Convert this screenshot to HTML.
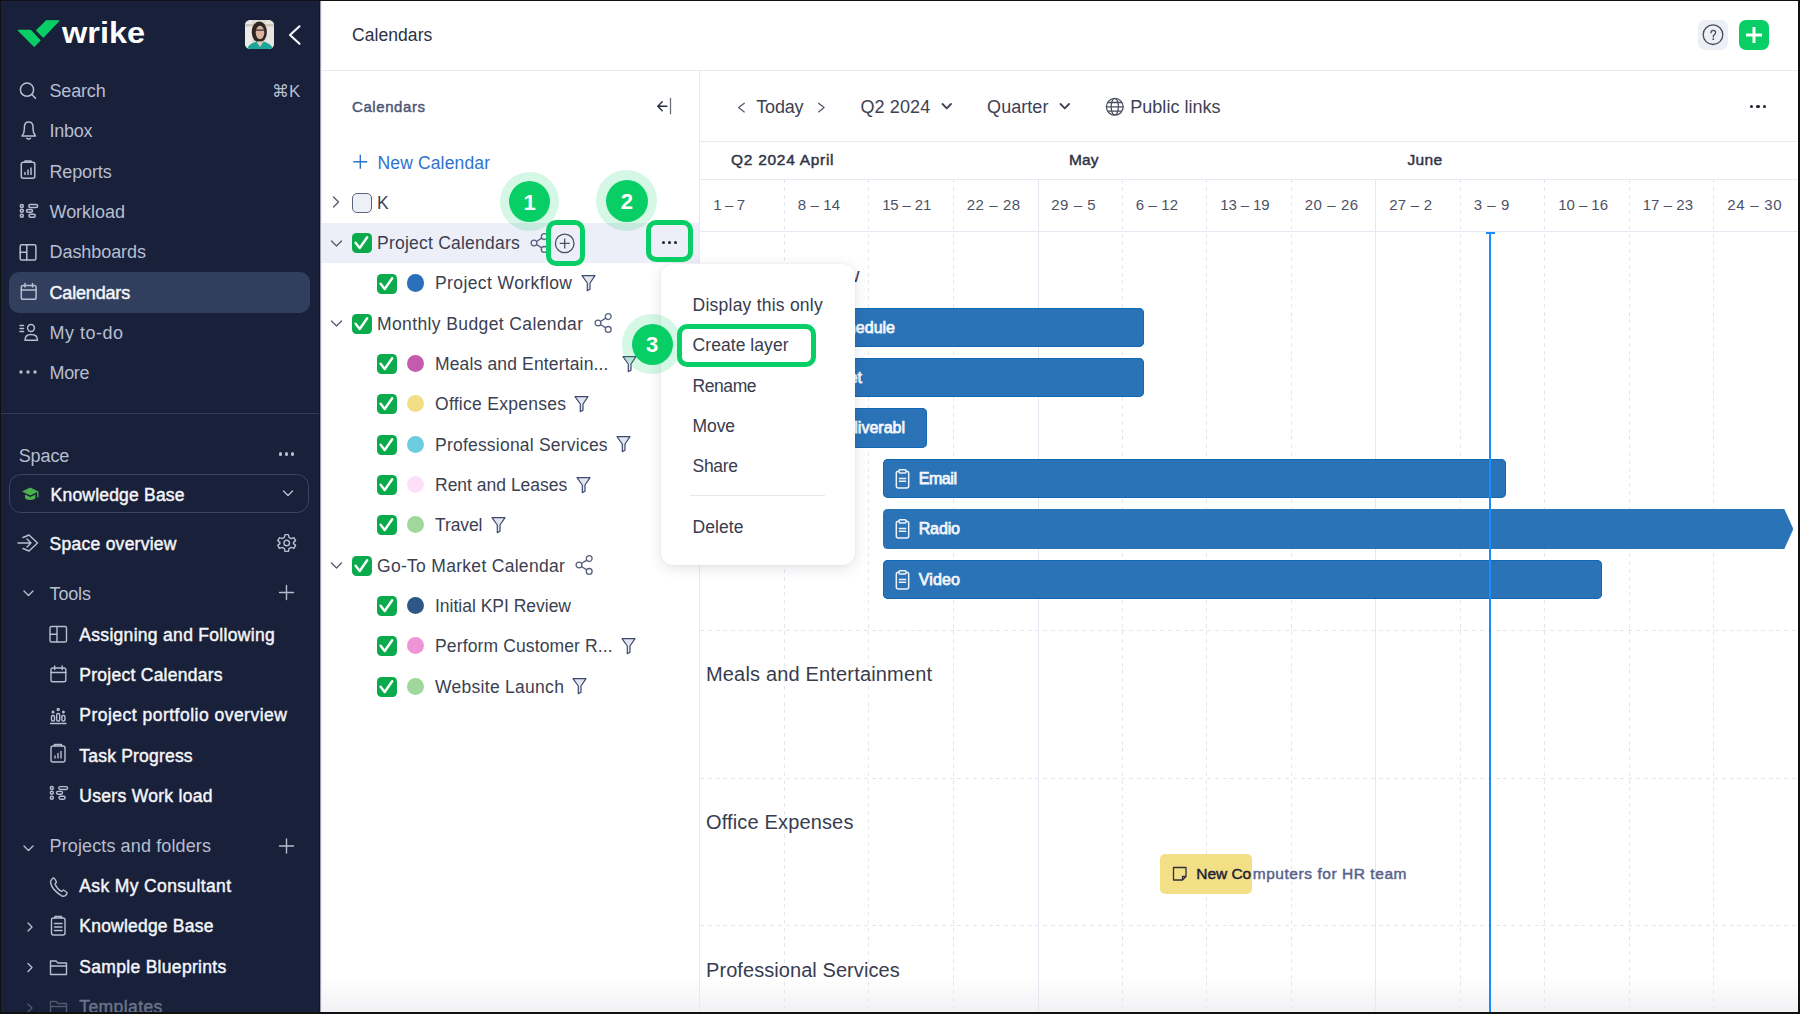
<!DOCTYPE html><html><head><meta charset="utf-8"><style>
html,body{margin:0;padding:0;width:1800px;height:1014px;overflow:hidden;background:#fff;font-family:"Liberation Sans",sans-serif;}
.t{position:absolute;white-space:nowrap;}
.b{position:absolute;}
</style></head><body>
<div class="b" style="left:0px;top:0px;width:320px;height:1014px;background:#19203a;"></div>
<svg class="b" style="left:10px;top:10px;" width="150" height="50" viewBox="0 0 150 50" fill="none"><path d="M8.3 20.4 L19.6 20.4 Q20.6 20.4 21.3 21.1 L30 30.4 L24.2 36.3 Z" fill="#08cf65" stroke="#08cf65" stroke-width="1.2" stroke-linejoin="round"/>
<path d="M26.7 20.4 L36.25 10.8 L48.75 10.8 L33.3 27.1 Z" fill="#08cf65" stroke="#08cf65" stroke-width="1.2" stroke-linejoin="round"/>
<text x="52" y="33.3" font-family="Liberation Sans" font-weight="700" font-size="30" fill="#ffffff" textLength="83" lengthAdjust="spacingAndGlyphs">wrike</text></svg>
<svg class="b" style="left:245px;top:20px;" width="29" height="29" viewBox="0 0 29 29" fill="none"><defs><clipPath id="av"><rect x="0" y="0" width="29" height="29" rx="5.5"/></clipPath></defs>
<g clip-path="url(#av)"><rect width="29" height="29" fill="#dedbd4"/><rect x="0" y="0" width="7" height="29" fill="#ebeae6"/><rect x="21" y="0" width="8" height="29" fill="#e6e5e1"/><rect x="0" y="4" width="29" height="2.5" fill="#cfc7b8"/>
<ellipse cx="14.3" cy="12" rx="7.6" ry="10.5" fill="#2f2522"/>
<ellipse cx="15" cy="12.5" rx="4.3" ry="6.8" fill="#d9b4a0"/>
<path d="M10.8 10.2 L19.2 10.2" stroke="#3a3030" stroke-width="1.2"/>
<ellipse cx="15" cy="30" rx="13" ry="8.5" fill="#1aa797"/>
<path d="M11.5 21.5 L15 27 L18.5 21.5 Z" fill="#e8c8b8"/></g></svg>
<svg class="b" style="left:285px;top:22px;" width="20" height="26" viewBox="0 0 20 26" fill="none"><path d="M14.5 4.3 L5 13 L14.5 21.8" stroke="#f3f5f9" stroke-width="2.2" stroke-linecap="round" stroke-linejoin="round"/></svg>
<div class="b" style="left:9px;top:272px;width:301px;height:41px;background:#323e5e;border-radius:10px;"></div>
<div class="t" style="left:49.50px;top:82.00px;font-size:18px;line-height:18px;color:#b7bed0;font-weight:400;letter-spacing:-0.167px;">Search</div>
<div class="t" style="left:49.50px;top:122.00px;font-size:18px;line-height:18px;color:#b7bed0;font-weight:400;letter-spacing:-0.258px;">Inbox</div>
<div class="t" style="left:49.50px;top:163.00px;font-size:18px;line-height:18px;color:#b7bed0;font-weight:400;letter-spacing:-0.138px;">Reports</div>
<div class="t" style="left:49.50px;top:203.00px;font-size:18px;line-height:18px;color:#b7bed0;font-weight:400;letter-spacing:-0.029px;">Workload</div>
<div class="t" style="left:49.50px;top:243.00px;font-size:18px;line-height:18px;color:#b7bed0;font-weight:400;letter-spacing:-0.062px;">Dashboards</div>
<div class="t" style="left:49.50px;top:284.00px;font-size:18px;line-height:18px;color:#f3f5f9;font-weight:400;letter-spacing:-0.169px;-webkit-text-stroke:0.45px #f3f5f9;">Calendars</div>
<div class="t" style="left:49.50px;top:324.00px;font-size:18px;line-height:18px;color:#b7bed0;font-weight:400;letter-spacing:0.497px;">My to-do</div>
<div class="t" style="left:49.50px;top:364.00px;font-size:18px;line-height:18px;color:#b7bed0;font-weight:400;letter-spacing:-0.337px;">More</div>
<div class="t" style="left:272.00px;top:83.00px;font-size:17px;line-height:17px;color:#b7bed0;font-weight:400;letter-spacing:0.000px;">&#8984;K</div>
<div class="b" style="left:0px;top:413px;width:320px;height:1px;background:#323c59;"></div>
<div class="t" style="left:18.70px;top:447.00px;font-size:18px;line-height:18px;color:#b7bed0;font-weight:400;letter-spacing:-0.110px;">Space</div>
<div class="b" style="left:278.8px;top:452.3px;width:3.4px;height:3.4px;background:#b7bed0;border-radius:50%;"></div>
<div class="b" style="left:284.8px;top:452.3px;width:3.4px;height:3.4px;background:#b7bed0;border-radius:50%;"></div>
<div class="b" style="left:290.8px;top:452.3px;width:3.4px;height:3.4px;background:#b7bed0;border-radius:50%;"></div>
<div class="b" style="left:9px;top:474px;width:300px;height:39px;background:transparent;border:1px solid #39445f;border-radius:12px;box-sizing:border-box;"></div>
<div class="t" style="left:50.60px;top:487.00px;font-size:17.5px;line-height:17.5px;color:#f3f5f9;font-weight:400;letter-spacing:0.196px;-webkit-text-stroke:0.45px #f3f5f9;">Knowledge Base</div>
<div class="t" style="left:49.60px;top:536.00px;font-size:17.5px;line-height:17.5px;color:#f3f5f9;font-weight:400;letter-spacing:0.259px;-webkit-text-stroke:0.45px #f3f5f9;">Space overview</div>
<div class="t" style="left:49.60px;top:585.00px;font-size:18px;line-height:18px;color:#b7bed0;font-weight:400;letter-spacing:-0.180px;">Tools</div>
<div class="t" style="left:79.30px;top:627.00px;font-size:17.5px;line-height:17.5px;color:#f3f5f9;font-weight:400;letter-spacing:0.303px;-webkit-text-stroke:0.45px #f3f5f9;">Assigning and Following</div>
<div class="t" style="left:79.30px;top:667.00px;font-size:17.5px;line-height:17.5px;color:#f3f5f9;font-weight:400;letter-spacing:0.263px;-webkit-text-stroke:0.45px #f3f5f9;">Project Calendars</div>
<div class="t" style="left:79.30px;top:707.00px;font-size:17.5px;line-height:17.5px;color:#f3f5f9;font-weight:400;letter-spacing:0.484px;-webkit-text-stroke:0.45px #f3f5f9;">Project portfolio overview</div>
<div class="t" style="left:79.30px;top:748.00px;font-size:17.5px;line-height:17.5px;color:#f3f5f9;font-weight:400;letter-spacing:0.202px;-webkit-text-stroke:0.45px #f3f5f9;">Task Progress</div>
<div class="t" style="left:79.30px;top:788.00px;font-size:17.5px;line-height:17.5px;color:#f3f5f9;font-weight:400;letter-spacing:0.298px;-webkit-text-stroke:0.45px #f3f5f9;">Users Work load</div>
<div class="t" style="left:49.50px;top:837.00px;font-size:18px;line-height:18px;color:#b7bed0;font-weight:400;letter-spacing:0.122px;">Projects and folders</div>
<div class="t" style="left:79.30px;top:878.00px;font-size:17.5px;line-height:17.5px;color:#f3f5f9;font-weight:400;letter-spacing:0.363px;-webkit-text-stroke:0.45px #f3f5f9;">Ask My Consultant</div>
<div class="t" style="left:79.30px;top:918.00px;font-size:17.5px;line-height:17.5px;color:#f3f5f9;font-weight:400;letter-spacing:0.212px;-webkit-text-stroke:0.45px #f3f5f9;">Knowledge Base</div>
<div class="t" style="left:79.30px;top:959.00px;font-size:17.5px;line-height:17.5px;color:#f3f5f9;font-weight:400;letter-spacing:0.305px;-webkit-text-stroke:0.45px #f3f5f9;">Sample Blueprints</div>
<div class="t" style="left:79.30px;top:999.00px;font-size:17.5px;line-height:17.5px;color:#6a7288;font-weight:400;letter-spacing:0.405px;-webkit-text-stroke:0.45px #6a7288;">Templates</div>
<div class="b" style="left:320px;top:0px;width:1480px;height:71px;background:#ffffff;"></div>
<div class="t" style="left:352.00px;top:27.00px;font-size:17.5px;line-height:17.5px;color:#2c3042;font-weight:400;letter-spacing:0.066px;">Calendars</div>
<div class="b" style="left:320px;top:70px;width:1480px;height:1px;background:#e6e9f1;"></div>
<div class="b" style="left:1698px;top:20px;width:30px;height:30px;background:#eceff6;border-radius:7px;"></div>
<div class="b" style="left:1739px;top:20px;width:30px;height:30px;background:#08cf65;border-radius:7px;"></div>
<div class="b" style="left:699px;top:71px;width:1px;height:943px;background:#e6e9f1;"></div>
<div class="t" style="left:352.00px;top:99.00px;font-size:15px;line-height:15px;color:#4b5577;font-weight:400;letter-spacing:0.578px;-webkit-text-stroke:0.45px #4b5577;">Calendars</div>
<div class="t" style="left:377.50px;top:155.00px;font-size:17.5px;line-height:17.5px;color:#2f72d0;font-weight:400;letter-spacing:0.146px;">New Calendar</div>
<div class="b" style="left:320px;top:223px;width:379px;height:40px;background:#eceff7;"></div>
<div class="b" style="left:700px;top:141px;width:1100px;height:1px;background:#e6e9f1;"></div>
<div class="b" style="left:700px;top:179px;width:1100px;height:1px;background:#e6e9f1;"></div>
<div class="b" style="left:700px;top:231px;width:1100px;height:1px;background:#e6e9f1;"></div>
<svg class="b" style="left:0px;top:60px;" width="60" height="340" viewBox="0 0 60 340" fill="none">
<g stroke="#b7bed0" stroke-width="1.5" fill="none" stroke-linecap="round" stroke-linejoin="round">
 <circle cx="27" cy="29.7" r="6.6"/><path d="M31.8 34.5 L35.5 38.3"/>
 <path d="M22 76 L35.5 76 Q33 73 33 69 L33 67 Q33 62 28.6 62 Q24.4 62 24.4 67 L24.4 69 Q24.4 73 22 76 Z"/><path d="M26.7 78.3 Q28.6 80 30.5 78.3"/>
 <rect x="21.3" y="102.3" width="13.5" height="16" rx="2"/><path d="M25 102.3 L25 101 L31 101 L31 102.3"/><path d="M25 114.5 L25 112.5 M28 114.5 L28 110 M31 114.5 L31 108"/>
 <circle cx="21.8" cy="146" r="1.5"/><circle cx="21.8" cy="150.8" r="1.5"/><circle cx="21.8" cy="155.7" r="1.5"/>
 <rect x="28.8" y="144.6" width="8.8" height="2.9" rx="1.45"/><rect x="26.5" y="149.4" width="6" height="2.9" rx="1.45"/><rect x="29" y="154.3" width="6.2" height="2.9" rx="1.45"/>
 <rect x="20.2" y="184.7" width="15.7" height="15.4" rx="1.5"/><path d="M26.8 184.7 L26.8 200.1 M20.2 192.3 L26.8 192.3"/>
 <rect x="21.3" y="225.5" width="14.8" height="13.8" rx="1.8"/><path d="M21.3 230 L36.1 230 M25 223.5 L25 227 M32.5 223.5 L32.5 227"/>
 <path d="M20 265.5 L23.5 265.5 M20 268.5 L23.5 268.5 M20 271.5 L23.5 271.5"/><circle cx="31" cy="268" r="3.4"/><path d="M25 280.2 Q25 274.5 31 274.5 Q37.5 274.5 37.5 280.2 Z"/>
</g>
<circle cx="21" cy="312" r="1.7" fill="#b7bed0"/><circle cx="28" cy="312" r="1.7" fill="#b7bed0"/><circle cx="35" cy="312" r="1.7" fill="#b7bed0"/>
</svg>
<svg class="b" style="left:0px;top:480px;" width="320" height="130" viewBox="0 0 320 130" fill="none">
<g fill="#4bae4f"><path d="M30.2 7.5 L38.5 11.5 L30.2 15.5 L21.9 11.5 Z"/><path d="M25 14.5 L25 18.5 Q30.2 21.5 35.4 18.5 L35.4 14.5 L30.2 17 Z"/><rect x="37.2" y="11.5" width="1.3" height="6"/></g>
<path d="M283.5 11 L288 15.5 L292.5 11" stroke="#b7bed0" stroke-width="1.4" fill="none" stroke-linecap="round" stroke-linejoin="round"/>
<g stroke="#b7bed0" stroke-width="1.4" fill="none" stroke-linecap="round" stroke-linejoin="round">
 <path d="M18 63 L31 63 M27 59 L31 63 L27 67"/><path d="M23 57.5 L29 55 L37.5 63 L29 71 L23 68.5"/>
 <path d="M24 111 L28.5 115.5 L33 111"/>
 <path d="M286.5 105.5 L286.5 119.5 M279.5 112.5 L293.5 112.5"/>
</g>
<g stroke="#b7bed0" stroke-width="1.4" fill="none">
 <circle cx="286.7" cy="63" r="2.8"/>
 <path d="M285 54.6 L288.4 54.6 L289 57.3 L291.3 58.6 L293.9 57.7 L295.6 60.6 L293.5 62.4 L293.5 63.6 L295.6 65.4 L293.9 68.3 L291.3 67.4 L289 68.7 L288.4 71.4 L285 71.4 L284.4 68.7 L282.1 67.4 L279.5 68.3 L277.8 65.4 L279.9 63.6 L279.9 62.4 L277.8 60.6 L279.5 57.7 L282.1 58.6 L284.4 57.3 Z" stroke-linejoin="round"/>
</g>
</svg>
<svg class="b" style="left:0px;top:620px;" width="320" height="394" viewBox="0 0 320 394" fill="none">
<g stroke="#b7bed0" stroke-width="1.4" fill="none" stroke-linecap="round" stroke-linejoin="round">
 <rect x="50" y="6.5" width="16.5" height="15.5" rx="1.5"/><path d="M57 6.5 L57 22 M50 14.3 L57 14.3"/>
 <rect x="51" y="48" width="14.8" height="13.8" rx="1.8"/><path d="M51 52.5 L65.8 52.5 M54.7 46 L54.7 49.5 M62.2 46 L62.2 49.5"/>
 <path d="M50.5 103.5 L66 103.5"/><rect x="51.5" y="95.5" width="3" height="5.5" rx="1.2"/><rect x="56.7" y="93.5" width="3" height="7.5" rx="1.2"/><rect x="61.9" y="95.5" width="3" height="5.5" rx="1.2"/><circle cx="58.2" cy="89.5" r="1"/><circle cx="53" cy="92" r="0.8"/><circle cx="63.4" cy="92" r="0.8"/>
 <rect x="51" y="126" width="14" height="16" rx="2"/><path d="M54.5 126 L54.5 124.5 L61.5 124.5 L61.5 126"/><path d="M55 138 L55 136 M58 138 L58 133.5 M61 138 L61 131.5"/>
 <circle cx="51.8" cy="168" r="1.5"/><circle cx="51.8" cy="172.8" r="1.5"/><circle cx="51.8" cy="177.7" r="1.5"/>
 <rect x="58.8" y="166.6" width="8.8" height="2.9" rx="1.45"/><rect x="56.5" y="171.4" width="6" height="2.9" rx="1.45"/><rect x="59" y="176.3" width="6.2" height="2.9" rx="1.45"/>
 <path d="M24 226 L28.5 230.5 L33 226"/>
 <path d="M286.5 219 L286.5 233 M279.5 226 L293.5 226"/>
 <path d="M53 258 Q50.5 260 50.5 262.5 Q52 270 62 276 Q64.5 277 66.5 274.5 L67 272.5 L63.5 270 L61.5 271.5 Q57 269 55 264 L56.5 262 L54.5 258.5 Z"/>
 <path d="M28 303 L32 307 L28 311"/><rect x="51.5" y="298" width="13.5" height="17" rx="2"/><path d="M55 298 L55 296.5 L61.5 296.5 L61.5 298 M54.5 303.5 L62 303.5 M54.5 307 L62 307 M54.5 310.5 L62 310.5"/>
 <path d="M28 343.5 L32 347.5 L28 351.5"/><path d="M50.5 354.5 L50.5 341 L56 341 L58 343 L66.5 343 L66.5 354.5 Z M50.5 346 L66.5 346"/>
 <g opacity="0.35"><path d="M28 384 L32 388 L28 392"/><path d="M50.5 395 L50.5 381.5 L56 381.5 L58 383.5 L66.5 383.5 L66.5 395 Z M50.5 386.5 L66.5 386.5"/></g>
</g>
</svg>
<svg class="b" style="left:1698px;top:20px;" width="30" height="30" viewBox="0 0 30 30" fill="none"><circle cx="15" cy="14.7" r="9.8" stroke="#4a4b55" stroke-width="1.3"/><path d="M13 12.8 Q13 10.4 15.3 10.4 Q17.6 10.4 17.6 12.6 Q17.6 13.9 16.2 14.8 Q15.3 15.5 15.3 16.9" stroke="#4a4b55" stroke-width="1.3" fill="none" stroke-linecap="round"/><circle cx="15.3" cy="19.2" r="0.9" fill="#4a4b55"/></svg>
<svg class="b" style="left:1739px;top:20px;" width="30" height="30" viewBox="0 0 30 30" fill="none"><path d="M15 7 L15 23 M7 15 L23 15" stroke="#ffffff" stroke-width="3"/></svg>
<svg class="b" style="left:640px;top:90px;" width="40" height="30" viewBox="0 0 40 30" fill="none"><path d="M17.8 16.3 L26.9 16.3 M22.2 11.8 L17.8 16.3 L22.2 20.7" stroke="#2a2e3e" stroke-width="1.4" fill="none" stroke-linecap="round" stroke-linejoin="round"/><path d="M30.5 8.5 L30.5 23.8" stroke="#6b6e78" stroke-width="1.3" stroke-linecap="round"/></svg>
<svg class="b" style="left:340px;top:145px;" width="40" height="30" viewBox="0 0 40 30" fill="none"><path d="M20.3 9.8 L20.3 23.8 M13.3 16.8 L27.3 16.8" stroke="#2f72d0" stroke-width="1.4" fill="none"/></svg>
<svg class="b" style="left:326px;top:192.3px;" width="20" height="20" viewBox="0 0 20 20" fill="none"><path d="M7.5 5 L12.5 10 L7.5 15" stroke="#55596b" stroke-width="1.3" fill="none" stroke-linecap="round" stroke-linejoin="round"/></svg>
<div class="b" style="left:352px;top:192.8px;width:20px;height:20px;background:#eef0f7;border:1.3px solid #5b647f;border-radius:5px;box-sizing:border-box;"></div>
<div class="t" style="left:377.00px;top:195.00px;font-size:17.5px;line-height:17.5px;color:#3b3f52;font-weight:400;letter-spacing:0.000px;">K</div>
<svg class="b" style="left:326px;top:232.63px;" width="20" height="20" viewBox="0 0 20 20" fill="none"><path d="M5.5 8 L10.5 13 L15.5 8" stroke="#55596b" stroke-width="1.3" fill="none" stroke-linecap="round" stroke-linejoin="round"/></svg>
<svg class="b" style="left:352px;top:233.1px;" width="20" height="20" viewBox="0 0 20 20" fill="none"><rect x="0" y="0" width="20" height="20" rx="4.5" fill="#0bab4d"/><path d="M3.6 9.8 L7.7 15 L15.2 4.2" stroke="#fff" stroke-width="2.4" fill="none" stroke-linecap="round" stroke-linejoin="round"/></svg>
<div class="t" style="left:377.00px;top:235.00px;font-size:17.5px;line-height:17.5px;color:#3b3f52;font-weight:400;letter-spacing:0.225px;">Project Calendars</div>
<svg class="b" style="left:530.2px;top:232.63px;" width="22" height="20" viewBox="0 0 22 20" fill="none"><g stroke="#56607e" stroke-width="1.3" fill="none"><circle cx="4" cy="10" r="2.9"/><circle cx="14.2" cy="3.6" r="2.9"/><circle cx="14.2" cy="16.4" r="2.9"/><path d="M6.5 8.5 L11.7 5.1 M6.5 11.5 L11.7 14.9"/></g></svg>
<svg class="b" style="left:376.5px;top:273.5px;" width="20" height="20" viewBox="0 0 20 20" fill="none"><rect x="0" y="0" width="20" height="20" rx="4.5" fill="#0bab4d"/><path d="M3.6 9.8 L7.7 15 L15.2 4.2" stroke="#fff" stroke-width="2.4" fill="none" stroke-linecap="round" stroke-linejoin="round"/></svg>
<div class="b" style="left:407px;top:274.4px;width:17.2px;height:17.2px;border-radius:50%;background:#2a6fba;"></div>
<div class="t" style="left:435.00px;top:275.00px;font-size:17.5px;line-height:17.5px;color:#3b3f52;font-weight:400;letter-spacing:0.402px;">Project Workflow</div>
<svg class="b" style="left:580.5px;top:274.96000000000004px;" width="16" height="18" viewBox="0 0 16 18" fill="none"><path d="M1 0.7 L14 0.7 L9 8 L9 14.2 L6.3 15.6 L6.3 8 Z" stroke="#3d4a6e" stroke-width="1.2" fill="#e3e6ef" stroke-linejoin="round"/></svg>
<svg class="b" style="left:326px;top:313.29px;" width="20" height="20" viewBox="0 0 20 20" fill="none"><path d="M5.5 8 L10.5 13 L15.5 8" stroke="#55596b" stroke-width="1.3" fill="none" stroke-linecap="round" stroke-linejoin="round"/></svg>
<svg class="b" style="left:352px;top:313.8px;" width="20" height="20" viewBox="0 0 20 20" fill="none"><rect x="0" y="0" width="20" height="20" rx="4.5" fill="#0bab4d"/><path d="M3.6 9.8 L7.7 15 L15.2 4.2" stroke="#fff" stroke-width="2.4" fill="none" stroke-linecap="round" stroke-linejoin="round"/></svg>
<div class="t" style="left:377.00px;top:316.00px;font-size:17.5px;line-height:17.5px;color:#3b3f52;font-weight:400;letter-spacing:0.387px;">Monthly Budget Calendar</div>
<svg class="b" style="left:593.5px;top:313.29px;" width="22" height="20" viewBox="0 0 22 20" fill="none"><g stroke="#56607e" stroke-width="1.3" fill="none"><circle cx="4" cy="10" r="2.9"/><circle cx="14.2" cy="3.6" r="2.9"/><circle cx="14.2" cy="16.4" r="2.9"/><path d="M6.5 8.5 L11.7 5.1 M6.5 11.5 L11.7 14.9"/></g></svg>
<svg class="b" style="left:376.5px;top:354.1px;" width="20" height="20" viewBox="0 0 20 20" fill="none"><rect x="0" y="0" width="20" height="20" rx="4.5" fill="#0bab4d"/><path d="M3.6 9.8 L7.7 15 L15.2 4.2" stroke="#fff" stroke-width="2.4" fill="none" stroke-linecap="round" stroke-linejoin="round"/></svg>
<div class="b" style="left:407px;top:355.0px;width:17.2px;height:17.2px;border-radius:50%;background:#c45baf;"></div>
<div class="t" style="left:435.00px;top:356.00px;font-size:17.5px;line-height:17.5px;color:#3b3f52;font-weight:400;letter-spacing:0.151px;">Meals and Entertain...</div>
<svg class="b" style="left:621.8px;top:355.62px;" width="16" height="18" viewBox="0 0 16 18" fill="none"><path d="M1 0.7 L14 0.7 L9 8 L9 14.2 L6.3 15.6 L6.3 8 Z" stroke="#3d4a6e" stroke-width="1.2" fill="#e3e6ef" stroke-linejoin="round"/></svg>
<svg class="b" style="left:376.5px;top:394.4px;" width="20" height="20" viewBox="0 0 20 20" fill="none"><rect x="0" y="0" width="20" height="20" rx="4.5" fill="#0bab4d"/><path d="M3.6 9.8 L7.7 15 L15.2 4.2" stroke="#fff" stroke-width="2.4" fill="none" stroke-linecap="round" stroke-linejoin="round"/></svg>
<div class="b" style="left:407px;top:395.3px;width:17.2px;height:17.2px;border-radius:50%;background:#f1de85;"></div>
<div class="t" style="left:435.00px;top:396.00px;font-size:17.5px;line-height:17.5px;color:#3b3f52;font-weight:400;letter-spacing:0.278px;">Office Expenses</div>
<svg class="b" style="left:574.3px;top:395.95px;" width="16" height="18" viewBox="0 0 16 18" fill="none"><path d="M1 0.7 L14 0.7 L9 8 L9 14.2 L6.3 15.6 L6.3 8 Z" stroke="#3d4a6e" stroke-width="1.2" fill="#e3e6ef" stroke-linejoin="round"/></svg>
<svg class="b" style="left:376.5px;top:434.8px;" width="20" height="20" viewBox="0 0 20 20" fill="none"><rect x="0" y="0" width="20" height="20" rx="4.5" fill="#0bab4d"/><path d="M3.6 9.8 L7.7 15 L15.2 4.2" stroke="#fff" stroke-width="2.4" fill="none" stroke-linecap="round" stroke-linejoin="round"/></svg>
<div class="b" style="left:407px;top:435.7px;width:17.2px;height:17.2px;border-radius:50%;background:#6ccde0;"></div>
<div class="t" style="left:435.00px;top:437.00px;font-size:17.5px;line-height:17.5px;color:#3b3f52;font-weight:400;letter-spacing:0.216px;">Professional Services</div>
<svg class="b" style="left:616.1px;top:436.28px;" width="16" height="18" viewBox="0 0 16 18" fill="none"><path d="M1 0.7 L14 0.7 L9 8 L9 14.2 L6.3 15.6 L6.3 8 Z" stroke="#3d4a6e" stroke-width="1.2" fill="#e3e6ef" stroke-linejoin="round"/></svg>
<svg class="b" style="left:376.5px;top:475.1px;" width="20" height="20" viewBox="0 0 20 20" fill="none"><rect x="0" y="0" width="20" height="20" rx="4.5" fill="#0bab4d"/><path d="M3.6 9.8 L7.7 15 L15.2 4.2" stroke="#fff" stroke-width="2.4" fill="none" stroke-linecap="round" stroke-linejoin="round"/></svg>
<div class="b" style="left:407px;top:476.0px;width:17.2px;height:17.2px;border-radius:50%;background:#fde0f8;"></div>
<div class="t" style="left:435.00px;top:477.00px;font-size:17.5px;line-height:17.5px;color:#3b3f52;font-weight:400;letter-spacing:-0.001px;">Rent and Leases</div>
<svg class="b" style="left:575.8px;top:476.61px;" width="16" height="18" viewBox="0 0 16 18" fill="none"><path d="M1 0.7 L14 0.7 L9 8 L9 14.2 L6.3 15.6 L6.3 8 Z" stroke="#3d4a6e" stroke-width="1.2" fill="#e3e6ef" stroke-linejoin="round"/></svg>
<svg class="b" style="left:376.5px;top:515.4px;" width="20" height="20" viewBox="0 0 20 20" fill="none"><rect x="0" y="0" width="20" height="20" rx="4.5" fill="#0bab4d"/><path d="M3.6 9.8 L7.7 15 L15.2 4.2" stroke="#fff" stroke-width="2.4" fill="none" stroke-linecap="round" stroke-linejoin="round"/></svg>
<div class="b" style="left:407px;top:516.3px;width:17.2px;height:17.2px;border-radius:50%;background:#9fd89a;"></div>
<div class="t" style="left:435.00px;top:517.00px;font-size:17.5px;line-height:17.5px;color:#3b3f52;font-weight:400;letter-spacing:-0.095px;">Travel</div>
<svg class="b" style="left:491.0px;top:516.94px;" width="16" height="18" viewBox="0 0 16 18" fill="none"><path d="M1 0.7 L14 0.7 L9 8 L9 14.2 L6.3 15.6 L6.3 8 Z" stroke="#3d4a6e" stroke-width="1.2" fill="#e3e6ef" stroke-linejoin="round"/></svg>
<svg class="b" style="left:326px;top:555.27px;" width="20" height="20" viewBox="0 0 20 20" fill="none"><path d="M5.5 8 L10.5 13 L15.5 8" stroke="#55596b" stroke-width="1.3" fill="none" stroke-linecap="round" stroke-linejoin="round"/></svg>
<svg class="b" style="left:352px;top:555.8px;" width="20" height="20" viewBox="0 0 20 20" fill="none"><rect x="0" y="0" width="20" height="20" rx="4.5" fill="#0bab4d"/><path d="M3.6 9.8 L7.7 15 L15.2 4.2" stroke="#fff" stroke-width="2.4" fill="none" stroke-linecap="round" stroke-linejoin="round"/></svg>
<div class="t" style="left:377.00px;top:558.00px;font-size:17.5px;line-height:17.5px;color:#3b3f52;font-weight:400;letter-spacing:0.296px;">Go-To Market Calendar</div>
<svg class="b" style="left:575.3px;top:555.27px;" width="22" height="20" viewBox="0 0 22 20" fill="none"><g stroke="#56607e" stroke-width="1.3" fill="none"><circle cx="4" cy="10" r="2.9"/><circle cx="14.2" cy="3.6" r="2.9"/><circle cx="14.2" cy="16.4" r="2.9"/><path d="M6.5 8.5 L11.7 5.1 M6.5 11.5 L11.7 14.9"/></g></svg>
<svg class="b" style="left:376.5px;top:596.1px;" width="20" height="20" viewBox="0 0 20 20" fill="none"><rect x="0" y="0" width="20" height="20" rx="4.5" fill="#0bab4d"/><path d="M3.6 9.8 L7.7 15 L15.2 4.2" stroke="#fff" stroke-width="2.4" fill="none" stroke-linecap="round" stroke-linejoin="round"/></svg>
<div class="b" style="left:407px;top:597.0px;width:17.2px;height:17.2px;border-radius:50%;background:#2e5788;"></div>
<div class="t" style="left:435.00px;top:598.00px;font-size:17.5px;line-height:17.5px;color:#3b3f52;font-weight:400;letter-spacing:-0.010px;">Initial KPI Review</div>
<svg class="b" style="left:376.5px;top:636.4px;" width="20" height="20" viewBox="0 0 20 20" fill="none"><rect x="0" y="0" width="20" height="20" rx="4.5" fill="#0bab4d"/><path d="M3.6 9.8 L7.7 15 L15.2 4.2" stroke="#fff" stroke-width="2.4" fill="none" stroke-linecap="round" stroke-linejoin="round"/></svg>
<div class="b" style="left:407px;top:637.3px;width:17.2px;height:17.2px;border-radius:50%;background:#f094d8;"></div>
<div class="t" style="left:435.00px;top:638.00px;font-size:17.5px;line-height:17.5px;color:#3b3f52;font-weight:400;letter-spacing:0.133px;">Perform Customer R...</div>
<svg class="b" style="left:621.2px;top:637.9300000000001px;" width="16" height="18" viewBox="0 0 16 18" fill="none"><path d="M1 0.7 L14 0.7 L9 8 L9 14.2 L6.3 15.6 L6.3 8 Z" stroke="#3d4a6e" stroke-width="1.2" fill="#e3e6ef" stroke-linejoin="round"/></svg>
<svg class="b" style="left:376.5px;top:676.8px;" width="20" height="20" viewBox="0 0 20 20" fill="none"><rect x="0" y="0" width="20" height="20" rx="4.5" fill="#0bab4d"/><path d="M3.6 9.8 L7.7 15 L15.2 4.2" stroke="#fff" stroke-width="2.4" fill="none" stroke-linecap="round" stroke-linejoin="round"/></svg>
<div class="b" style="left:407px;top:677.7px;width:17.2px;height:17.2px;border-radius:50%;background:#9fd89a;"></div>
<div class="t" style="left:435.00px;top:679.00px;font-size:17.5px;line-height:17.5px;color:#3b3f52;font-weight:400;letter-spacing:0.286px;">Website Launch</div>
<svg class="b" style="left:572.4px;top:678.26px;" width="16" height="18" viewBox="0 0 16 18" fill="none"><path d="M1 0.7 L14 0.7 L9 8 L9 14.2 L6.3 15.6 L6.3 8 Z" stroke="#3d4a6e" stroke-width="1.2" fill="#e3e6ef" stroke-linejoin="round"/></svg>
<svg class="b" style="left:730px;top:95px;" width="20" height="22" viewBox="0 0 20 22" fill="none"><path d="M14.3 8.3 L8.6 12.6 L14.3 16.9" stroke="#55596b" stroke-width="1.3" fill="none" stroke-linecap="round" stroke-linejoin="round"/></svg>
<div class="t" style="left:756.30px;top:98.00px;font-size:18px;line-height:18px;color:#3d4152;font-weight:400;letter-spacing:-0.183px;">Today</div>
<svg class="b" style="left:810px;top:95px;" width="20" height="22" viewBox="0 0 20 22" fill="none"><path d="M8.6 8.3 L14.1 12.6 L8.6 16.9" stroke="#55596b" stroke-width="1.3" fill="none" stroke-linecap="round" stroke-linejoin="round"/></svg>
<div class="t" style="left:860.50px;top:98.00px;font-size:18px;line-height:18px;color:#3d4152;font-weight:400;letter-spacing:0.107px;">Q2 2024</div>
<svg class="b" style="left:938px;top:97px;" width="18" height="18" viewBox="0 0 18 18" fill="none"><path d="M4.5 7 L8.8 11.3 L13 7" stroke="#3d4152" stroke-width="1.8" fill="none" stroke-linecap="round" stroke-linejoin="round"/></svg>
<div class="t" style="left:987.10px;top:98.00px;font-size:18px;line-height:18px;color:#3d4152;font-weight:400;letter-spacing:0.046px;">Quarter</div>
<svg class="b" style="left:1056px;top:97px;" width="18" height="18" viewBox="0 0 18 18" fill="none"><path d="M4.5 7 L8.8 11.3 L13 7" stroke="#3d4152" stroke-width="1.8" fill="none" stroke-linecap="round" stroke-linejoin="round"/></svg>
<svg class="b" style="left:1104px;top:96px;" width="22" height="22" viewBox="0 0 22 22" fill="none"><g stroke="#4a4e60" stroke-width="1.3" fill="none"><circle cx="10.8" cy="10.8" r="8.4"/><ellipse cx="10.8" cy="10.8" rx="3.6" ry="8.4"/><path d="M2.4 10.8 L19.2 10.8 M3.6 6.5 L18 6.5 M3.6 15.1 L18 15.1"/></g></svg>
<div class="t" style="left:1130.30px;top:98.00px;font-size:18px;line-height:18px;color:#3d4152;font-weight:400;letter-spacing:0.015px;">Public links</div>
<div class="b" style="left:1749.7px;top:104.5px;width:3.6px;height:3.6px;background:#1f2330;border-radius:50%;"></div>
<div class="b" style="left:1756.2px;top:104.5px;width:3.6px;height:3.6px;background:#1f2330;border-radius:50%;"></div>
<div class="b" style="left:1762.7px;top:104.5px;width:3.6px;height:3.6px;background:#1f2330;border-radius:50%;"></div>
<div class="t" style="left:731.00px;top:152.00px;font-size:15.5px;line-height:15.5px;color:#2f3344;font-weight:400;letter-spacing:0.714px;-webkit-text-stroke:0.45px #2f3344;">Q2 2024 April</div>
<div class="t" style="left:1069.00px;top:152.00px;font-size:15.5px;line-height:15.5px;color:#2f3344;font-weight:400;letter-spacing:0.109px;-webkit-text-stroke:0.45px #2f3344;">May</div>
<div class="t" style="left:1407.40px;top:152.00px;font-size:15.5px;line-height:15.5px;color:#2f3344;font-weight:400;letter-spacing:0.396px;-webkit-text-stroke:0.45px #2f3344;">June</div>
<div class="t" style="left:713.20px;top:197.00px;font-size:15px;line-height:15px;color:#4d5266;font-weight:400;letter-spacing:-0.341px;">1 – 7</div>
<div class="t" style="left:797.70px;top:197.00px;font-size:15px;line-height:15px;color:#4d5266;font-weight:400;letter-spacing:0.119px;">8 – 14</div>
<div class="t" style="left:882.20px;top:197.00px;font-size:15px;line-height:15px;color:#4d5266;font-weight:400;letter-spacing:-0.158px;">15 – 21</div>
<div class="t" style="left:966.70px;top:197.00px;font-size:15px;line-height:15px;color:#4d5266;font-weight:400;letter-spacing:0.575px;">22 – 28</div>
<div class="t" style="left:1051.20px;top:197.00px;font-size:15px;line-height:15px;color:#4d5266;font-weight:400;letter-spacing:0.559px;">29 – 5</div>
<div class="t" style="left:1135.70px;top:197.00px;font-size:15px;line-height:15px;color:#4d5266;font-weight:400;letter-spacing:0.139px;">6 – 12</div>
<div class="t" style="left:1220.20px;top:197.00px;font-size:15px;line-height:15px;color:#4d5266;font-weight:400;letter-spacing:-0.091px;">13 – 19</div>
<div class="t" style="left:1304.70px;top:197.00px;font-size:15px;line-height:15px;color:#4d5266;font-weight:400;letter-spacing:0.575px;">20 – 26</div>
<div class="t" style="left:1389.20px;top:197.00px;font-size:15px;line-height:15px;color:#4d5266;font-weight:400;letter-spacing:0.259px;">27 – 2</div>
<div class="t" style="left:1473.70px;top:197.00px;font-size:15px;line-height:15px;color:#4d5266;font-weight:400;letter-spacing:0.584px;">3 – 9</div>
<div class="t" style="left:1558.20px;top:197.00px;font-size:15px;line-height:15px;color:#4d5266;font-weight:400;letter-spacing:-0.041px;">10 – 16</div>
<div class="t" style="left:1642.70px;top:197.00px;font-size:15px;line-height:15px;color:#4d5266;font-weight:400;letter-spacing:0.042px;">17 – 23</div>
<div class="t" style="left:1727.20px;top:197.00px;font-size:15px;line-height:15px;color:#4d5266;font-weight:400;letter-spacing:0.725px;">24 – 30</div>
<div class="b" style="left:784px;top:179px;width:1px;height:835px;background:repeating-linear-gradient(180deg,#e2e6ef 0 4px,transparent 4px 7.8px);"></div>
<div class="b" style="left:868px;top:179px;width:1px;height:835px;background:repeating-linear-gradient(180deg,#e2e6ef 0 4px,transparent 4px 7.8px);"></div>
<div class="b" style="left:953px;top:179px;width:1px;height:835px;background:repeating-linear-gradient(180deg,#e2e6ef 0 4px,transparent 4px 7.8px);"></div>
<div class="b" style="left:1038px;top:179px;width:1px;height:835px;background:#e3e7f0;"></div>
<div class="b" style="left:1122px;top:179px;width:1px;height:835px;background:repeating-linear-gradient(180deg,#e2e6ef 0 4px,transparent 4px 7.8px);"></div>
<div class="b" style="left:1206px;top:179px;width:1px;height:835px;background:repeating-linear-gradient(180deg,#e2e6ef 0 4px,transparent 4px 7.8px);"></div>
<div class="b" style="left:1291px;top:179px;width:1px;height:835px;background:repeating-linear-gradient(180deg,#e2e6ef 0 4px,transparent 4px 7.8px);"></div>
<div class="b" style="left:1375px;top:179px;width:1px;height:835px;background:#e3e7f0;"></div>
<div class="b" style="left:1460px;top:179px;width:1px;height:835px;background:repeating-linear-gradient(180deg,#e2e6ef 0 4px,transparent 4px 7.8px);"></div>
<div class="b" style="left:1544px;top:179px;width:1px;height:835px;background:repeating-linear-gradient(180deg,#e2e6ef 0 4px,transparent 4px 7.8px);"></div>
<div class="b" style="left:1629px;top:179px;width:1px;height:835px;background:repeating-linear-gradient(180deg,#e2e6ef 0 4px,transparent 4px 7.8px);"></div>
<div class="b" style="left:1713px;top:179px;width:1px;height:835px;background:repeating-linear-gradient(180deg,#e2e6ef 0 4px,transparent 4px 7.8px);"></div>
<div class="b" style="left:700px;top:629.5px;width:1100px;height:1px;background:repeating-linear-gradient(90deg,#e2e6ef 0 4px,transparent 4px 7.8px);"></div>
<div class="b" style="left:700px;top:777.5px;width:1100px;height:1px;background:repeating-linear-gradient(90deg,#e2e6ef 0 4px,transparent 4px 7.8px);"></div>
<div class="b" style="left:700px;top:924.5px;width:1100px;height:1px;background:repeating-linear-gradient(90deg,#e2e6ef 0 4px,transparent 4px 7.8px);"></div>
<div class="t" style="left:706.00px;top:265.00px;font-size:20px;line-height:20px;color:#383c4f;font-weight:400;letter-spacing:0.255px;">Project Workflow</div>
<div class="t" style="left:706.00px;top:664.00px;font-size:20px;line-height:20px;color:#383c4f;font-weight:400;letter-spacing:0.170px;">Meals and Entertainment</div>
<div class="t" style="left:706.00px;top:812.00px;font-size:20px;line-height:20px;color:#383c4f;font-weight:400;letter-spacing:0.152px;">Office Expenses</div>
<div class="t" style="left:706.00px;top:960.00px;font-size:20px;line-height:20px;color:#383c4f;font-weight:400;letter-spacing:0.069px;">Professional Services</div>
<div class="b" style="left:740px;top:307.6px;width:404px;height:39.39999999999998px;background:#2a73b7;border-radius:5px;box-shadow:inset 0 0 0 1px #1268b3;"></div>
<div class="t" style="left:828.28px;top:320.00px;font-size:16px;line-height:16px;color:#f4f6fb;font-weight:400;letter-spacing:0.000px;-webkit-text-stroke:0.45px #f4f6fb;-webkit-text-stroke:0.75px #f4f6fb;">Schedule</div>
<div class="b" style="left:740px;top:358px;width:404px;height:39px;background:#2a73b7;border-radius:5px;box-shadow:inset 0 0 0 1px #1268b3;"></div>
<div class="t" style="left:811.29px;top:370.00px;font-size:16px;line-height:16px;color:#f4f6fb;font-weight:400;letter-spacing:0.000px;-webkit-text-stroke:0.45px #f4f6fb;-webkit-text-stroke:0.75px #f4f6fb;">Budget</div>
<div class="b" style="left:740px;top:408.4px;width:187px;height:39.200000000000045px;background:#2a73b7;border-radius:5px;box-shadow:inset 0 0 0 1px #1268b3;"></div>
<div class="t" style="left:833.86px;top:420.00px;font-size:16px;line-height:16px;color:#f4f6fb;font-weight:400;letter-spacing:0.000px;-webkit-text-stroke:0.45px #f4f6fb;-webkit-text-stroke:0.75px #f4f6fb;">Deliverabl</div>
<div class="b" style="left:882.7px;top:459px;width:623.3px;height:39px;background:#2a73b7;border-radius:5px;box-shadow:inset 0 0 0 1px #1268b3;"></div>
<svg class="b" style="left:892.7px;top:467px;" width="20" height="24" viewBox="0 0 20 24" fill="none"><g stroke="#eef1f7" stroke-width="1.5" fill="none"><rect x="3.3" y="4.3" width="12.4" height="16.7" rx="2"/><rect x="6" y="2.8" width="7" height="3.2" rx="1" fill="#2a73b7"/><path d="M5.8 11.5 L13.2 11.5 M5.8 14.2 L13.2 14.2"/></g></svg>
<div class="t" style="left:918.70px;top:471.00px;font-size:16px;line-height:16px;color:#f4f6fb;font-weight:400;letter-spacing:-0.428px;-webkit-text-stroke:0.45px #f4f6fb;-webkit-text-stroke:0.75px #f4f6fb;">Email</div>
<svg class="b" style="left:882.7px;top:509px" width="910.3" height="40" viewBox="0 0 910.3 40"><path d="M5 0 L901.3 0 L910.3 20.0 L901.3 40 L5 40 Q0 40 0 35 L0 5 Q0 0 5 0 Z" fill="#2a73b7"/></svg>
<svg class="b" style="left:892.7px;top:517px;" width="20" height="24" viewBox="0 0 20 24" fill="none"><g stroke="#eef1f7" stroke-width="1.5" fill="none"><rect x="3.3" y="4.3" width="12.4" height="16.7" rx="2"/><rect x="6" y="2.8" width="7" height="3.2" rx="1" fill="#2a73b7"/><path d="M5.8 11.5 L13.2 11.5 M5.8 14.2 L13.2 14.2"/></g></svg>
<div class="t" style="left:918.70px;top:521.00px;font-size:16px;line-height:16px;color:#f4f6fb;font-weight:400;letter-spacing:-0.127px;-webkit-text-stroke:0.45px #f4f6fb;-webkit-text-stroke:0.75px #f4f6fb;">Radio</div>
<div class="b" style="left:882.7px;top:560px;width:719.8px;height:39px;background:#2a73b7;border-radius:5px;box-shadow:inset 0 0 0 1px #1268b3;"></div>
<svg class="b" style="left:892.7px;top:568px;" width="20" height="24" viewBox="0 0 20 24" fill="none"><g stroke="#eef1f7" stroke-width="1.5" fill="none"><rect x="3.3" y="4.3" width="12.4" height="16.7" rx="2"/><rect x="6" y="2.8" width="7" height="3.2" rx="1" fill="#2a73b7"/><path d="M5.8 11.5 L13.2 11.5 M5.8 14.2 L13.2 14.2"/></g></svg>
<div class="t" style="left:918.70px;top:572.00px;font-size:16px;line-height:16px;color:#f4f6fb;font-weight:400;letter-spacing:0.166px;-webkit-text-stroke:0.45px #f4f6fb;-webkit-text-stroke:0.75px #f4f6fb;">Video</div>
<div class="b" style="left:1160.3px;top:854.3px;width:91.3px;height:39.6px;background:#f3df85;border-radius:5px;"></div>
<svg class="b" style="left:1170px;top:864px;" width="20" height="20" viewBox="0 0 20 20" fill="none"><path d="M3.5 3.5 L16 3.5 L16 12.5 L12.5 16 L3.5 16 Z M12.5 16 L12.5 12.5 L16 12.5" stroke="#2d3140" stroke-width="1.3" fill="none" stroke-linejoin="round"/></svg>
<div class="t" style="left:1196.30px;top:866.00px;font-size:15.5px;line-height:15.5px;color:#1f2332;font-weight:400;letter-spacing:-0.050px;-webkit-text-stroke:0.45px #1f2332;">New Co</div>
<div class="t" style="left:1252.68px;top:866.00px;font-size:15.5px;line-height:15.5px;color:#56628a;font-weight:400;letter-spacing:0.554px;-webkit-text-stroke:0.45px #56628a;">mputers for HR team</div>
<div class="b" style="left:320px;top:976px;width:1478px;height:36px;background:linear-gradient(180deg,rgba(236,236,240,0) 0%,rgba(236,236,240,0.7) 100%);"></div>
<div class="b" style="left:1489px;top:232px;width:2px;height:782px;background:#1a8cff;"></div>
<div class="b" style="left:1485.5px;top:231.5px;width:9px;height:2px;background:#1a8cff;"></div>
<svg class="b" style="left:552px;top:231px;" width="26" height="26" viewBox="0 0 26 26" fill="none"><circle cx="12.7" cy="12.4" r="9.3" stroke="#4a4f62" stroke-width="1.3" fill="none"/><path d="M12.7 7.4 L12.7 17.4 M7.7 12.4 L17.7 12.4" stroke="#4a4f62" stroke-width="1.3"/></svg>
<div class="b" style="left:661.5px;top:240.8px;width:3.6px;height:3.6px;background:#1f2330;border-radius:50%;"></div>
<div class="b" style="left:667.7px;top:240.8px;width:3.6px;height:3.6px;background:#1f2330;border-radius:50%;"></div>
<div class="b" style="left:673.9000000000001px;top:240.8px;width:3.6px;height:3.6px;background:#1f2330;border-radius:50%;"></div>
<div class="b" style="left:660.5px;top:263.5px;width:194.2px;height:301.3px;background:#fff;border-radius:12px;box-shadow:0 3px 14px rgba(30,40,80,0.13),0 0 2px rgba(30,40,80,0.08);"></div>
<div class="t" style="left:692.60px;top:297.00px;font-size:17.5px;line-height:17.5px;color:#383c4e;font-weight:400;letter-spacing:0.229px;">Display this only</div>
<div class="t" style="left:692.60px;top:337.00px;font-size:17.5px;line-height:17.5px;color:#383c4e;font-weight:400;letter-spacing:0.053px;">Create layer</div>
<div class="t" style="left:692.60px;top:378.00px;font-size:17.5px;line-height:17.5px;color:#383c4e;font-weight:400;letter-spacing:-0.450px;">Rename</div>
<div class="t" style="left:692.60px;top:418.00px;font-size:17.5px;line-height:17.5px;color:#383c4e;font-weight:400;letter-spacing:-0.131px;">Move</div>
<div class="t" style="left:692.60px;top:458.00px;font-size:17.5px;line-height:17.5px;color:#383c4e;font-weight:400;letter-spacing:-0.325px;">Share</div>
<div class="b" style="left:690px;top:494.5px;width:135.4px;height:1px;background:#e4e7ee;"></div>
<div class="t" style="left:692.60px;top:519.00px;font-size:17.5px;line-height:17.5px;color:#383c4e;font-weight:400;letter-spacing:0.063px;">Delete</div>
<div class="b" style="left:500.0px;top:172.0px;width:59.4px;height:59.4px;border-radius:50%;background:rgba(8,207,101,0.17);"></div>
<div class="b" style="left:509.2px;top:181.2px;width:41.0px;height:41.0px;border-radius:50%;background:#08cf65;"></div>
<div class="t" style="left:523.58px;top:192.00px;font-size:22px;line-height:22px;color:#ffffff;font-weight:700;letter-spacing:0.000px;">1</div>
<div class="b" style="left:596.3px;top:170.4px;width:61.0px;height:61.0px;border-radius:50%;background:rgba(8,207,101,0.17);"></div>
<div class="b" style="left:605.8px;top:179.9px;width:42.0px;height:42.0px;border-radius:50%;background:#08cf65;"></div>
<div class="t" style="left:620.68px;top:191.00px;font-size:22px;line-height:22px;color:#ffffff;font-weight:700;letter-spacing:0.000px;">2</div>
<div class="b" style="left:622.0px;top:314.2px;width:60.0px;height:60.0px;border-radius:50%;background:rgba(8,207,101,0.17);"></div>
<div class="b" style="left:631.5px;top:323.7px;width:41.0px;height:41.0px;border-radius:50%;background:#08cf65;"></div>
<div class="t" style="left:645.88px;top:334.00px;font-size:22px;line-height:22px;color:#ffffff;font-weight:700;letter-spacing:0.000px;">3</div>
<div class="b" style="left:546px;top:219.8px;width:38.7px;height:46.5px;border:5.5px solid #08cf65;border-radius:10px;box-sizing:border-box;"></div>
<div class="b" style="left:645.8px;top:219.8px;width:47.2px;height:42.6px;border:5.5px solid #08cf65;border-radius:10px;box-sizing:border-box;"></div>
<div class="b" style="left:677.2px;top:323.7px;width:138.8px;height:43.6px;border:5.5px solid #08cf65;border-radius:10px;box-sizing:border-box;"></div>
<div class="b" style="left:319px;top:0px;width:1px;height:1014px;background:#0e1834;"></div>
<div class="b" style="left:320px;top:0px;width:1px;height:1014px;background:#9a9eaa;"></div>
<div class="b" style="left:321px;top:0px;width:1px;height:1014px;background:#eceef1;"></div>
<div class="b" style="left:0px;top:0px;width:1800px;height:1px;background:#111111;"></div>
<div class="b" style="left:0px;top:0px;width:1px;height:1014px;background:#111111;"></div>
<div class="b" style="left:1798px;top:0px;width:2px;height:1014px;background:#111111;"></div>
<div class="b" style="left:0px;top:1012px;width:1800px;height:2px;background:#111111;"></div>
</body></html>
